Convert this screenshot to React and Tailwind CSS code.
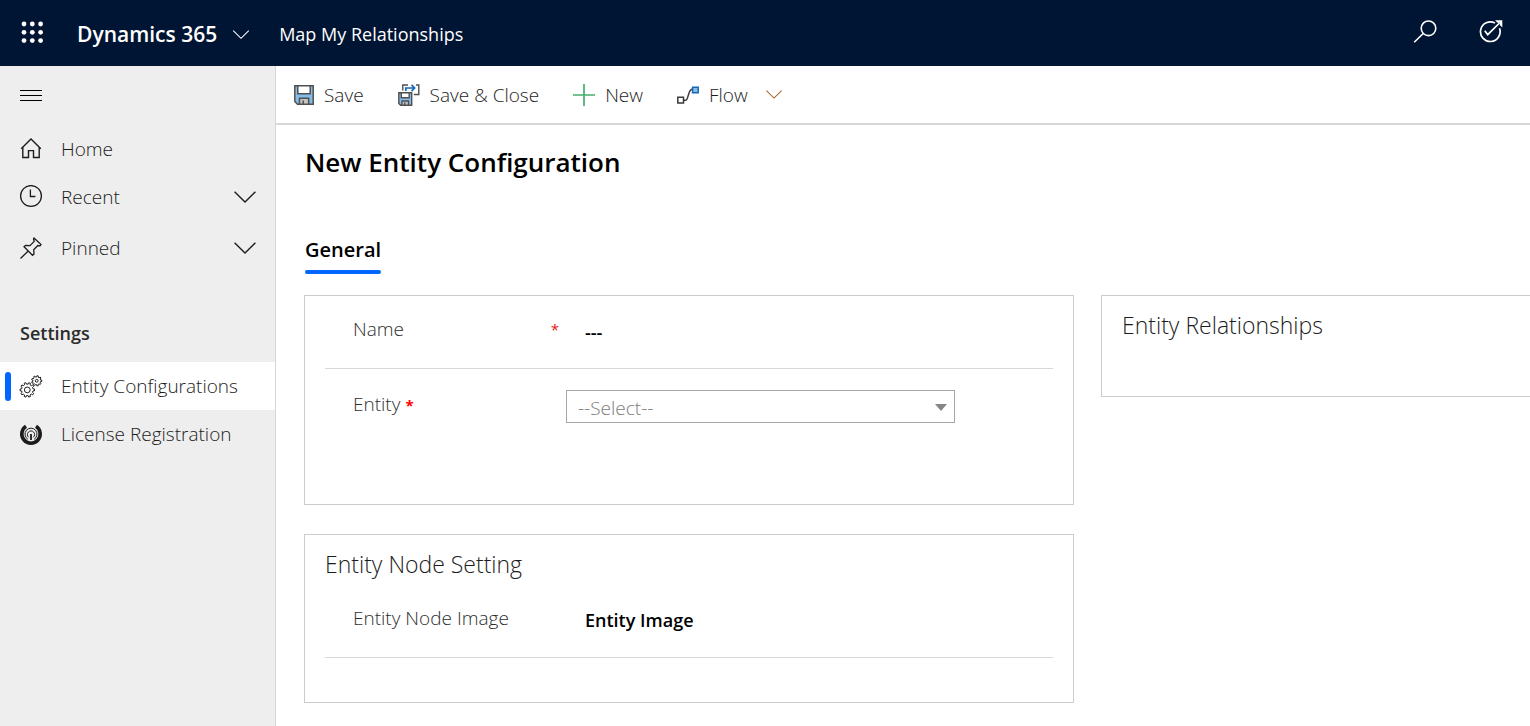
import React from "react";

function gearPath(cx, cy, outer, inner, teeth) {
  const step = (Math.PI * 2) / teeth;
  const at = (r, a) =>
    `${(cx + r * Math.cos(a)).toFixed(2)} ${(cy + r * Math.sin(a)).toFixed(2)}`;
  let d = "";
  for (let i = 0; i < teeth; i++) {
    const a = i * step;
    d += `${i === 0 ? "M" : "L"}${at(inner, a - step * 0.28)}`;
    d += `L${at(outer, a - step * 0.2)}L${at(outer, a + step * 0.2)}`;
    d += `L${at(inner, a + step * 0.28)}`;
  }
  return d + "Z";
}

function Icon({ className = "size-6", viewBox = "0 0 24 24", children, width = 1.3 }) {
  return (
    <svg
      aria-hidden="true"
      viewBox={viewBox}
      className={`shrink-0 ${className}`}
      fill="none"
      stroke="currentColor"
      strokeWidth={width}
    >
      {children}
    </svg>
  );
}

const WaffleIcon = () => (
  <Icon>
    {[3, 11.3, 19.6].map((y) =>
      [4, 12.3, 20.6].map((x) => (
        <circle key={`${x}-${y}`} cx={x} cy={y} r="2.4" fill="currentColor" stroke="none" />
      ))
    )}
  </Icon>
);

const ChevronIcon = ({ className }) => (
  <svg
    aria-hidden="true"
    viewBox="0 0 22 12"
    className={`shrink-0 ${className}`}
    fill="none"
    stroke="currentColor"
    strokeWidth="1.4"
  >
    <path d="M.6.8 11 11 21.4.8" />
  </svg>
);

const SearchIcon = () => (
  <Icon width={1.6}>
    <circle cx="15.5" cy="9.300" r="7.300" />
    <path d="M10.200 14.500 1.200 23.300" />
  </Icon>
);

const TargetIcon = () => (
  <Icon width={1.7}>
    <path d="M16 4.100A9.800 9.800 0 1 0 20.500 9.300" />
    <path d="m5.800 11.800 2.900 3.800L20.500 4" />
    <path d="M16 1.200h7.300v7.300l-2.500-2.500-.1-2.200-2.200-.1Z" fill="currentColor" stroke="none" />
  </Icon>
);

const MenuIcon = () => (
  <Icon width={1}>
    <path d="M1 6.500h22M1 11.500h22M1 16.500h22" />
  </Icon>
);

const HomeIcon = () => (
  <Icon width={1.4}>
    <path d="m2.200 11.800 9.800-9.700 9.800 9.700" />
    <path d="M3.800 10.300v10.200h5.700v-6.900h5v6.900h5.700V10.300" />
  </Icon>
);

const ClockIcon = () => (
  <Icon>
    <circle cx="12" cy="11" r="10.400" />
    <path d="M11.400 4.500v7h5" />
  </Icon>
);

const PinIcon = () => (
  <Icon>
    <path d="m15 2 7 6.600-1 1.200-2.200-.3-4.100 4.200.3 4.300-1.500 1.300L5 10.800l1.500-1.500 4.500.3 4.200-4.200L14.500 3Z" />
    <path d="m9 15.200-7.500 7.300" />
  </Icon>
);

const GearsIcon = () => (
  <Icon width={1}>
    <path d={gearPath(8.3, 15.9, 7.3, 5.8, 10)} />
    <circle cx="8.3" cy="15.9" r="2.9" />
    <path d={gearPath(17.7, 6.8, 5.1, 3.9, 9)} />
    <circle cx="17.7" cy="6.8" r="1.4" />
  </Icon>
);

const LicenseIcon = () => (
  <Icon>
    <path d="M7 4.300a9.200 9.200 0 1 0 10 0" strokeWidth="3.600" />
    <path d="M8.900 17.300a6 6 0 1 1 6.200 0" strokeWidth="1" />
    <path d="M9.700 15.300a3.600 3.600 0 1 1 4.600 0" strokeWidth="1" />
    <path d="M12 12v6" strokeWidth="1.800" />
  </Icon>
);

const SaveIcon = () => (
  <Icon viewBox="0 0 20 20" className="size-5" width={1.5}>
    <path d="M.8.8h18.400v18.400H3.500L.8 16.500Z" fill="#86bce8" stroke="#505050" />
    <path d="M3.800.8h12.400v8H3.800Z" fill="#fff" stroke="#505050" />
    <path d="M5.500 19.200v-6h9.200v6Z" fill="#c4c4c4" stroke="#505050" />
    <path d="M9.200 15.500v3.700" stroke="#505050" />
  </Icon>
);

const SaveCloseIcon = () => (
  <Icon viewBox="1 1 22 22" className="size-[22px]" width={1.4}>
    <path d="M1.800 9.700h12.900v12.500H3.600l-1.800-1.800Z" fill="#86bce8" stroke="#505050" />
    <path d="M4.300 9.700h7.900v5H4.300Z" fill="#fff" stroke="#505050" />
    <path d="M5 22.200v-4.200h6.500v4.200Z" fill="#c4c4c4" stroke="#505050" />
    <path d="M7.800 19.500v2.700" stroke="#505050" />
    <path d="M11 2H5.800v5.500M19 2h2.800v9.500h-5" stroke="#505050" />
    <path d="M8.800 8V5h8.600M14.500 1.900l3.100 3.100-3.100 3.100" stroke="#1668b8" strokeWidth="1.700" />
  </Icon>
);

const PlusIcon = () => (
  <Icon viewBox="1 1 22 22" className="size-[22px]" width={1.7}>
    <path d="M12 1v22M1 12h22" stroke="#43ad6d" />
  </Icon>
);

const FlowIcon = () => (
  <Icon viewBox="1 1 22 22" className="size-[22px]" width={1.5}>
    <path d="M7.500 17.200h2.200c2.800 0 2.300-11.200 6.800-11.200" stroke="#3a3a3a" />
    <path d="M1.800 14.200h5.700v5.700H1.800Z" stroke="#3a3a3a" fill="#fff" />
    <path d="M16.600 4.200h5.600v5.600h-5.600Z" stroke="#1668b8" fill="#86bce8" />
  </Icon>
);

function NavItem({ icon, label, expandable, active, tall }) {
  return (
    <a
      href="#"
      aria-current={active ? "page" : undefined}
      className={`relative flex items-center gap-[18px] pr-[19px] pl-[19px] ${
        tall ? "h-[54px]" : "h-12"
      } ${active ? "bg-white" : ""}`}
    >
      {active && <span className="absolute left-[5px] h-[29px] w-[6px] rounded-full bg-[#0066ff]" />}
      {icon}
      <span className="flex-1 whitespace-nowrap">{label}</span>
      {expandable && <ChevronIcon className="h-3 w-[22px]" />}
    </a>
  );
}

function Command({ icon, label, children }) {
  return (
    <button type="button" className="flex items-center gap-[10px] whitespace-nowrap">
      {icon}
      <span>{label}</span>
      {children}
    </button>
  );
}

export default function App() {
  return (
    <div className="flex min-h-screen flex-col overflow-x-hidden bg-white font-['Open_Sans','Noto_Sans',sans-serif] text-[19px] leading-6 font-light text-[#1c1c1c]">
      <header className="flex h-[66px] items-center bg-[#001433] pr-[27px] pl-5 text-white">
        <button type="button" aria-label="App launcher">
          <WaffleIcon />
        </button>
        <button type="button" className="ml-[33px] flex items-center gap-[15px] pt-[2px] text-[21px] font-semibold">
          Dynamics 365
          <ChevronIcon className="h-[9px] w-[18px]" />
        </button>
        <a href="#" className="ml-[29px] pt-[2px] text-[18px] font-normal">
          Map My Relationships
        </a>
        <div className="ml-auto flex gap-[42px] pb-1">
          <button type="button" aria-label="Search">
            <SearchIcon />
          </button>
          <button type="button" aria-label="Assistant">
            <TargetIcon />
          </button>
        </div>
      </header>

      <div className="flex flex-1">
        <nav className="w-[276px] shrink-0 border-r border-[#d6d6d6] bg-[#eeeeee]">
          <button type="button" aria-label="Toggle navigation" className="flex h-[59px] items-center pl-[19px] text-black">
            <MenuIcon />
          </button>
          <NavItem icon={<HomeIcon />} label="Home" />
          <NavItem icon={<ClockIcon />} label="Recent" expandable />
          <NavItem icon={<PinIcon />} label="Pinned" expandable tall />
          <h2 className="flex h-[87px] items-end px-5 pb-[17px] text-[18px] font-semibold text-[#2b2b2b]">Settings</h2>
          <NavItem icon={<GearsIcon />} label="Entity Configurations" active />
          <NavItem icon={<LicenseIcon />} label="License Registration" />
        </nav>

        <main className="min-w-0 flex-1">
          <div className="flex h-[59px] items-center gap-[34px] border-b-2 border-[#d8d8d8] pl-[18px]">
            <Command icon={<SaveIcon />} label="Save" />
            <Command icon={<SaveCloseIcon />} label="Save & Close" />
            <Command icon={<PlusIcon />} label="New" />
            <Command icon={<FlowIcon />} label="Flow">
              <ChevronIcon className="ml-2 h-[9px] w-4 text-[#a5622a]" />
            </Command>
          </div>

          <div className="pl-[29px]">
            <h1 className="pt-[19px] text-[26px] leading-9 font-semibold text-black">New Entity Configuration</h1>
            <div role="tablist" className="mt-[55px] flex">
              <button
                type="button"
                role="tab"
                aria-selected="true"
                className="flex flex-col gap-[5px] text-[20px] leading-[30px] font-semibold text-black"
              >
                General
                <span className="h-1 w-full rounded-full bg-[#0066ff]" />
              </button>
            </div>
          </div>

          <div className="mt-[21px] pl-7">
            <div className="grid grid-cols-[minmax(0,770fr)_minmax(0,429fr)] items-start gap-x-[27px]">
              <div className="flex flex-col gap-[29px]">
                <section className="h-[210px] border border-[#cccccc] px-5">
                  <div className="flex h-[73px] items-center border-b border-[#d8d8d8] pl-7 text-[#2e2e2e]">
                    <label htmlFor="name" className="flex w-[232px] shrink-0 items-center justify-between pr-[26px] pb-[6px]">
                      Name
                      <span className="text-[15px] font-normal text-[#e81123]">*</span>
                    </label>
                    <input
                      id="name"
                      defaultValue="---"
                      className="w-full min-w-0 bg-transparent text-[18px] font-semibold text-black outline-none"
                    />
                  </div>
                  <div className="flex h-[74px] items-center pl-7 text-[#2e2e2e]">
                    <label htmlFor="entity" className="w-[213px] shrink-0 pb-1">
                      Entity <span className="text-[15px] font-bold text-[#ff0000]">*</span>
                    </label>
                    <div className="relative w-[389px]">
                      <select
                        id="entity"
                        className="h-[33px] w-full appearance-none border border-[#a6a6a6] bg-white pt-[3px] pl-[11px] text-[#7c7c7c] outline-none"
                      >
                        <option>--Select--</option>
                      </select>
                      <svg
                        aria-hidden="true"
                        viewBox="0 0 12 7"
                        className="pointer-events-none absolute top-[14px] right-2 h-[7px] w-3"
                      >
                        <path d="M0 0h12L6 7Z" fill="#858585" />
                      </svg>
                    </div>
                  </div>
                </section>

                <section className="h-[169px] border border-[#cccccc] px-5 pt-[14px]">
                  <h2 className="text-[23px] leading-[30px]">Entity Node Setting</h2>
                  <div className="flex h-[79px] items-center border-b border-[#d8d8d8] pt-1 pl-7 text-[#2e2e2e]">
                    <label htmlFor="node-image" className="w-[232px] shrink-0 pb-1">
                      Entity Node Image
                    </label>
                    <input
                      id="node-image"
                      defaultValue="Entity Image"
                      className="w-full min-w-0 bg-transparent text-[18px] font-semibold text-black outline-none"
                    />
                  </div>
                </section>
              </div>

              <section className="h-[102px] border border-r-0 border-[#cccccc] px-5 pt-[14px]">
                <h2 className="text-[23px] leading-[30px]">Entity Relationships</h2>
              </section>
            </div>
          </div>
        </main>
      </div>
    </div>
  );
}
